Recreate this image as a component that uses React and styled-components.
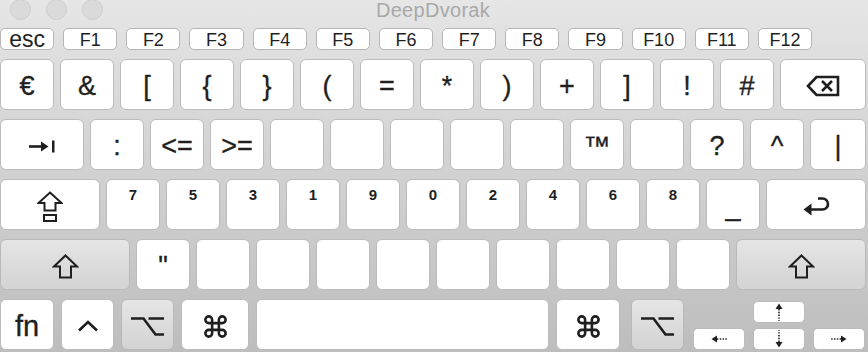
import React from 'react';
import styled, { createGlobalStyle } from 'styled-components';
import { Command } from 'lucide-react';

const GlobalStyle = createGlobalStyle`
  html, body {
    margin: 0;
    padding: 0;
  }
  body {
    width: 868px;
    height: 352px;
    overflow: hidden;
  }
`;

const Window = styled.div`
  width: 868px;
  height: 352px;
  box-sizing: border-box;
  padding-right: 2px;
  background: linear-gradient(to bottom, #e6e6e6 0%, #dadada 25%, #cbcbcb 65%, #bdbdbd 100%);
  font-family: "Liberation Sans", Arial, sans-serif;
  color: #1f1f1f;
  overflow: hidden;
`;

const TitleBar = styled.div`
  height: 28px;
  display: grid;
  grid-template-columns: 1fr auto 1fr;
  align-items: start;
`;

const Lights = styled.div`
  display: flex;
  gap: 15px;
  padding-left: 10px;
  margin-top: -1px;
`;

const Light = styled.span`
  width: 21px;
  height: 21px;
  border-radius: 50%;
  box-sizing: border-box;
  background: #dadada;
  border: 1px solid #cdcdcd;
`;

const Title = styled.div`
  font-size: 20px;
  line-height: 21px;
  color: #a9a9a9;
  letter-spacing: 0.3px;
`;

const FnRow = styled.div`
  display: flex;
  gap: 9px;
  width: 812px;
  height: 22px;
`;

const FnKey = styled.div`
  flex: 1;
  box-sizing: border-box;
  height: 22px;
  display: flex;
  align-items: center;
  justify-content: center;
  padding-top: 1px;
  background: #fff;
  border: 1px solid #b6b6b6;
  border-radius: 5px;
  font-size: ${(p) => p.$size || 18}px;
  line-height: 1;
`;

const Rows = styled.div`
  display: flex;
  flex-direction: column;
  gap: 9px;
  margin-top: 9px;
`;

const Row = styled.div`
  display: flex;
  gap: ${(p) => p.$gap || 6}px;
  height: 51px;
`;

const Key = styled.div`
  box-sizing: border-box;
  flex: ${(p) => (p.$w ? `0 0 ${p.$w}px` : '1 1 0')};
  margin-left: ${(p) => p.$ml || 0}px;
  height: 100%;
  display: flex;
  align-items: center;
  justify-content: center;
  padding-top: 3px;
  border: 1px solid ${(p) => (p.$mod ? '#b9b9b9' : '#bcbcbc')};
  border-radius: 6px;
  background: ${(p) => (p.$mod ? 'linear-gradient(to bottom, #e5e5e5, #d3d3d3)' : '#fff')};
  font-size: ${(p) => p.$size || 27}px;
  -webkit-text-stroke: 0.35px #1f1f1f;
  line-height: 1;
  white-space: nowrap;
`;

const Digit = styled.span`
  align-self: flex-start;
  margin-top: 4px;
  font-size: 15px;
  font-weight: bold;
  -webkit-text-stroke: 0;
`;

const ArrowCluster = styled.div`
  flex: 0 0 173px;
  margin-left: ${(p) => p.$ml || 0}px;
  display: grid;
  grid-template-columns: 52px 52px 52px;
  grid-template-rows: 22px 22px;
  column-gap: 8px;
  row-gap: 5px;
  align-self: end;
  height: 49px;
`;

const ArrowKey = styled.div`
  box-sizing: border-box;
  grid-column: ${(p) => p.$col};
  grid-row: ${(p) => p.$row};
  display: flex;
  align-items: center;
  justify-content: center;
  background: #fff;
  border: 1px solid #bcbcbc;
  border-radius: 5px;
`;

const ink = '#1f1f1f';

const BackspaceIcon = () => (
  <svg width="34" height="22" viewBox="0 0 34 22">
    <path d="M2 11 L10.5 2 H32 V20 H10.5 Z" fill="none" stroke={ink} strokeWidth="2.6" strokeLinejoin="miter" />
    <path d="M16 6 L26 16 M26 6 L16 16" stroke={ink} strokeWidth="2.6" />
  </svg>
);

const TabIcon = () => (
  <svg width="26" height="13" viewBox="0 0 26 13">
    <path d="M0 6.5 H14" stroke={ink} strokeWidth="2.6" />
    <path d="M12 1.5 L19.5 6.5 L12 11.5 Z" fill={ink} />
    <rect x="23" y="0.5" width="2.5" height="12" fill={ink} />
  </svg>
);

const ShiftIcon = () => (
  <svg width="27" height="25" viewBox="0 0 27 25">
    <path d="M13.5 1.5 L25 12.5 H19 V23.5 H8 V12.5 H2 Z" fill="none" stroke={ink} strokeWidth="2" strokeLinejoin="miter" />
  </svg>
);

const CapsIcon = () => (
  <svg width="26" height="31" viewBox="0 0 26 31">
    <path d="M13 1.5 L24.5 12 H18.5 V19.5 H7.5 V12 H1.5 Z" fill="none" stroke={ink} strokeWidth="2" />
    <rect x="7" y="24" width="12" height="6" fill="none" stroke={ink} strokeWidth="2" />
  </svg>
);

const ReturnIcon = () => (
  <svg width="27" height="21" viewBox="0 0 27 21">
    <path d="M15 2.5 H19.5 A5.5 5.5 0 0 1 19.5 13.5 H7" fill="none" stroke={ink} strokeWidth="2.6" />
    <path d="M0.5 13.5 L8.5 7.5 V19.5 Z" fill={ink} />
  </svg>
);

const OptionIcon = () => (
  <svg width="35" height="21" viewBox="0 0 35 21">
    <path d="M1 2.5 H13.5 L25.5 18.5 H34 M18.5 2.5 H34" fill="none" stroke={ink} strokeWidth="2.6" />
  </svg>
);

const CaretIcon = () => (
  <svg width="22" height="12" viewBox="0 0 22 12">
    <path d="M2 10.5 L11 2 L20 10.5" fill="none" stroke={ink} strokeWidth="2.6" />
  </svg>
);

const DotArrow = ({ dir }) => {
  const rot = { up: 0, right: 90, down: 180, left: 270 }[dir];
  const vertical = dir === 'up' || dir === 'down';
  const len = vertical ? 18 : 16;
  return (
    <svg
      width={vertical ? 8 : len}
      height={vertical ? len : 8}
      viewBox={vertical ? `0 0 8 ${len}` : `0 0 ${len} 8`}
    >
      <g transform={vertical ? `rotate(${rot} 4 ${len / 2})` : `rotate(${rot} ${len / 2} 4) translate(${(len - 8) / 2} ${-(len - 8) / 2})`}>
        <path d="M4 0.5 L7.5 6 H0.5 Z" fill={ink} />
        <path d={`M4 6 V${len}`} stroke={ink} strokeWidth="1.6" strokeDasharray="1.4 1.4" />
      </g>
    </svg>
  );
};

const fnLabels = ['F1', 'F2', 'F3', 'F4', 'F5', 'F6', 'F7', 'F8', 'F9', 'F10', 'F11', 'F12'];
const row1 = ['€', '&', '[', '{', '}', '(', '=', '*', ')', '+', ']', '!', '#'];
const row2 = [':', '<=', '>=', '', '', '', '', '', '™', '', '?', '^'];
const row3 = ['7', '5', '3', '1', '9', '0', '2', '4', '6', '8'];
const row4 = ['"', '', '', '', '', '', '', '', '', ''];

export default function App() {
  return (
    <>
      <GlobalStyle />
      <Window>
        <TitleBar>
          <Lights>
            <Light />
            <Light />
            <Light />
          </Lights>
          <Title>DeepDvorak</Title>
          <div />
        </TitleBar>

        <FnRow>
          <FnKey $size={23}>esc</FnKey>
          {fnLabels.map((l) => (
            <FnKey key={l}>{l}</FnKey>
          ))}
        </FnRow>

        <Rows>
          <Row>
            {row1.map((l, i) => (
              <Key key={i} $w={54}>{l}</Key>
            ))}
            <Key>
              <BackspaceIcon />
            </Key>
          </Row>

          <Row>
            <Key $w={84}>
              <TabIcon />
            </Key>
            {row2.map((l, i) => (
              <Key key={i} $w={54}>{l}</Key>
            ))}
            <Key>|</Key>
          </Row>

          <Row>
            <Key $w={100}>
              <CapsIcon />
            </Key>
            {row3.map((d) => (
              <Key key={d} $w={54}>
                <Digit>{d}</Digit>
              </Key>
            ))}
            <Key $w={54}>_</Key>
            <Key>
              <ReturnIcon />
            </Key>
          </Row>

          <Row>
            <Key $w={130} $mod>
              <ShiftIcon />
            </Key>
            {row4.map((l, i) => (
              <Key key={i} $w={54}>{l}</Key>
            ))}
            <Key $mod>
              <ShiftIcon />
            </Key>
          </Row>

          <Row $gap={7}>
            <Key $w={54} $size={29}>fn</Key>
            <Key $w={53}>
              <CaretIcon />
            </Key>
            <Key $w={53} $mod>
              <OptionIcon />
            </Key>
            <Key $w={68}>
              <Command size={27} strokeWidth={2.3} color={ink} />
            </Key>
            <Key />
            <Key $w={64}>
              <Command size={27} strokeWidth={2.3} color={ink} />
            </Key>
            <Key $w={53} $ml={4} $mod>
              <OptionIcon />
            </Key>
            <ArrowCluster $ml={2}>
              <ArrowKey $col={2} $row={1}>
                <DotArrow dir="up" />
              </ArrowKey>
              <ArrowKey $col={1} $row={2}>
                <DotArrow dir="left" />
              </ArrowKey>
              <ArrowKey $col={2} $row={2}>
                <DotArrow dir="down" />
              </ArrowKey>
              <ArrowKey $col={3} $row={2}>
                <DotArrow dir="right" />
              </ArrowKey>
            </ArrowCluster>
          </Row>
        </Rows>
      </Window>
    </>
  );
}
